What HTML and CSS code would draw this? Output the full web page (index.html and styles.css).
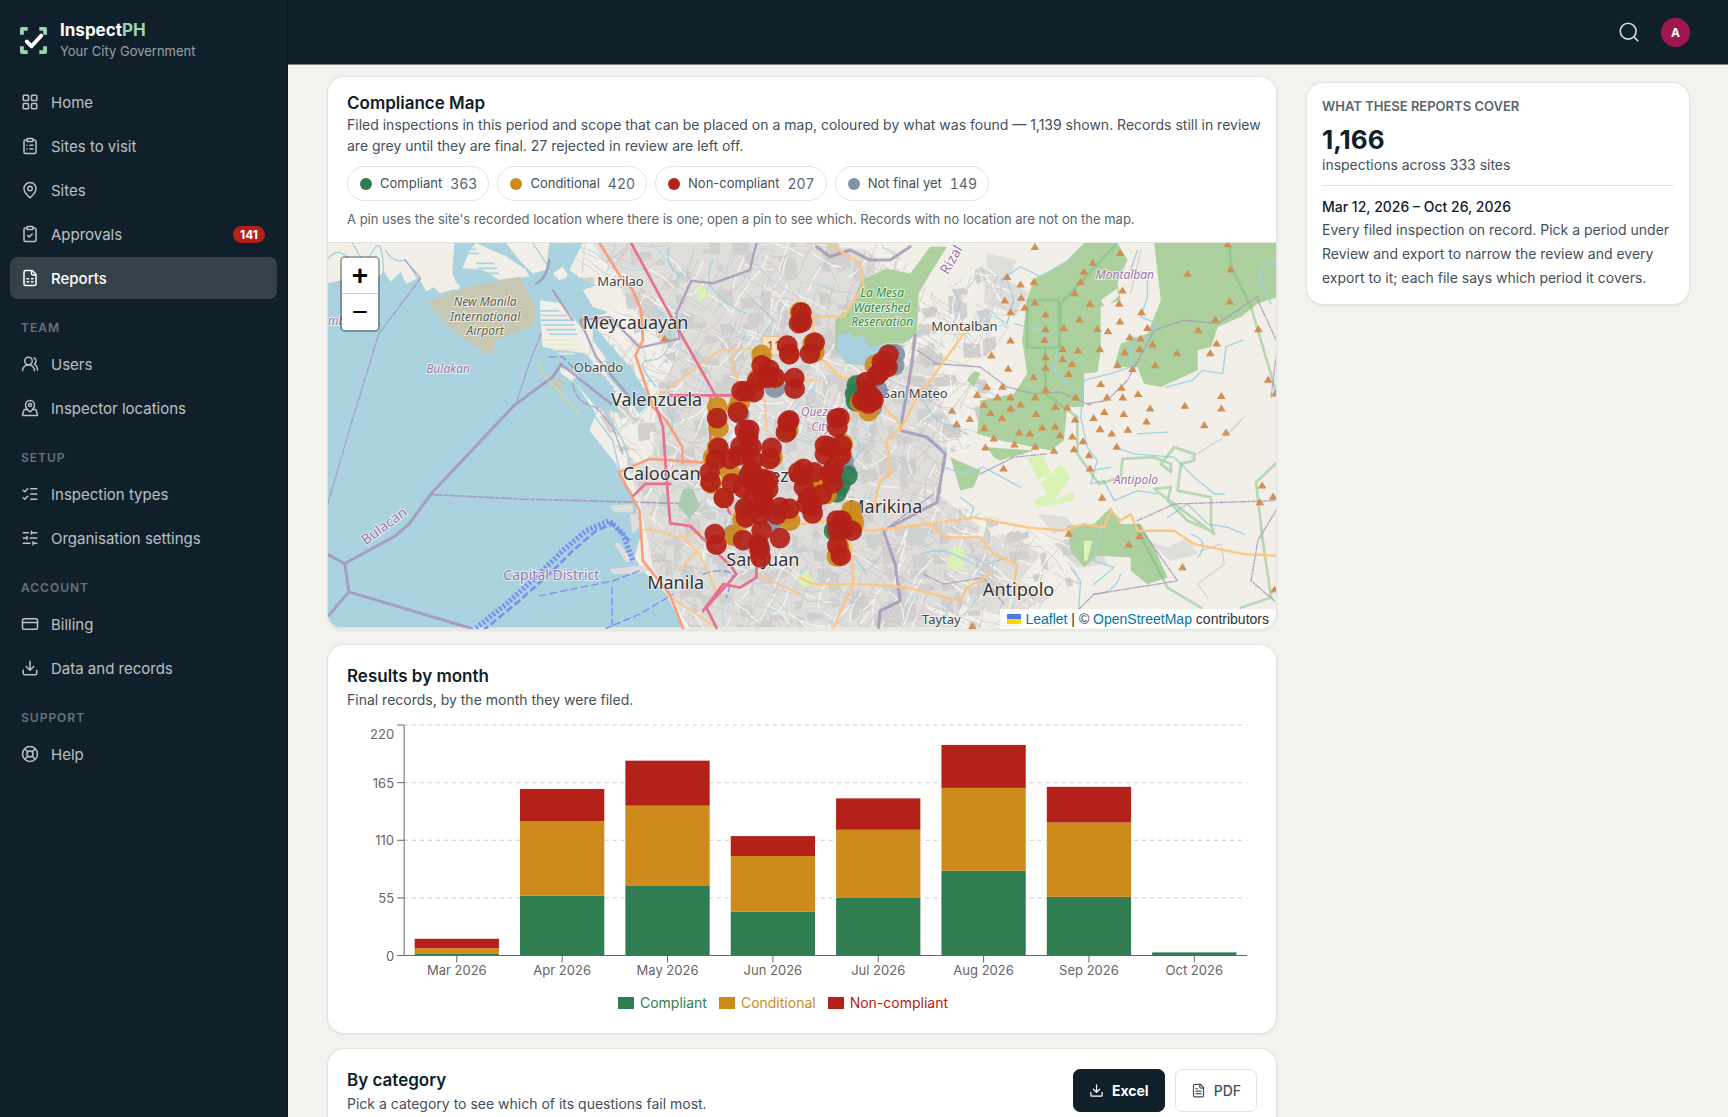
FILE: index.html
```html
<!DOCTYPE html>
<html lang="en">
<head>
<meta charset="utf-8">
<meta name="viewport" content="width=device-width, initial-scale=1">
<title>Reports – InspectPH</title>
<link rel="stylesheet" href="styles.css">
</head>
<body>
<svg class="sprite" aria-hidden="true">
  <symbol id="i-grid" viewBox="0 0 24 24"><rect x="3" y="3" width="7" height="7" rx="1"/><rect x="14" y="3" width="7" height="7" rx="1"/><rect x="14" y="14" width="7" height="7" rx="1"/><rect x="3" y="14" width="7" height="7" rx="1"/></symbol>
  <symbol id="i-cliplist" viewBox="0 0 24 24"><rect x="8" y="2" width="8" height="4" rx="1"/><path d="M16 4h2a2 2 0 0 1 2 2v14a2 2 0 0 1-2 2H6a2 2 0 0 1-2-2V6a2 2 0 0 1 2-2h2M12 11h4M12 16h4M8 11h.01M8 16h.01"/></symbol>
  <symbol id="i-pin" viewBox="0 0 24 24"><path d="M20 10c0 5-5.500 10.200-7.400 11.800a1 1 0 0 1-1.200 0C9.500 20.200 4 15 4 10a8 8 0 0 1 16 0"/><circle cx="12" cy="10" r="3"/></symbol>
  <symbol id="i-clipcheck" viewBox="0 0 24 24"><rect x="8" y="2" width="8" height="4" rx="1"/><path d="M16 4h2a2 2 0 0 1 2 2v14a2 2 0 0 1-2 2H6a2 2 0 0 1-2-2V6a2 2 0 0 1 2-2h2M9 14l2 2 4-4"/></symbol>
  <symbol id="i-sheet" viewBox="0 0 24 24"><path d="M15 2H6a2 2 0 0 0-2 2v16a2 2 0 0 0 2 2h12a2 2 0 0 0 2-2V7zM14 2v4a2 2 0 0 0 2 2h4M8 13h2M14 13h2M8 17h2M14 17h2"/></symbol>
  <symbol id="i-users" viewBox="0 0 24 24"><path d="M18 21a8 8 0 0 0-16 0"/><circle cx="10" cy="8" r="5"/><path d="M22 20c0-3.370-2-6.500-4-8a5 5 0 0 0-.450-8.300"/></symbol>
  <symbol id="i-pinned" viewBox="0 0 24 24"><path d="M18 8c0 3.613-3.869 7.429-5.393 8.795a1 1 0 0 1-1.214 0C9.870 15.429 6 11.613 6 8a6 6 0 0 1 12 0"/><circle cx="12" cy="8" r="2"/><path d="M8.714 14h-3.710a1 1 0 0 0-.948.683l-2.004 6A1 1 0 0 0 3 22h18a1 1 0 0 0 .948-1.316l-2-6a1 1 0 0 0-.949-.684h-3.712"/></symbol>
  <symbol id="i-checks" viewBox="0 0 24 24"><path d="M13 5h8M13 12h8M13 19h8M3 17l2 2 4-4M3 7l2 2 4-4"/></symbol>
  <symbol id="i-sliders" viewBox="0 0 24 24"><path d="M10 5H3M12 19H3M14 3v4M16 17v4M21 12h-9M21 19h-5M21 5h-7M8 10v4M8 12H3"/></symbol>
  <symbol id="i-card" viewBox="0 0 24 24"><rect x="2" y="5" width="20" height="14" rx="2"/><path d="M2 10h20"/></symbol>
  <symbol id="i-download" viewBox="0 0 24 24"><path d="M12 3v12M7 10l5 5 5-5M21 15v4a2 2 0 0 1-2 2H5a2 2 0 0 1-2-2v-4"/></symbol>
  <symbol id="i-help" viewBox="0 0 24 24"><circle cx="12" cy="12" r="10"/><circle cx="12" cy="12" r="4"/><path d="M4.930 4.930l4.240 4.240M14.830 9.170l4.240-4.240M14.830 14.830l4.240 4.240M9.170 14.830l-4.240 4.240"/></symbol>
  <symbol id="i-doc" viewBox="0 0 24 24"><path d="M15 2H6a2 2 0 0 0-2 2v16a2 2 0 0 0 2 2h12a2 2 0 0 0 2-2V7zM14 2v4a2 2 0 0 0 2 2h4M10 9H8M16 13H8M16 17H8"/></symbol>
  <symbol id="i-search" viewBox="0 0 24 24"><circle cx="11" cy="11" r="9.500"/><path d="M22.500 22.500l-4.700-4.700"/></symbol>
</svg>

<div class="shell">
  <aside class="sidebar">
    <div class="brand">
      <svg class="brand-mark" viewBox="0 0 30 30" aria-hidden="true">
        <path class="brand-frame" d="M3 9V3h6M21 3h6v6M27 21v6h-6M9 27H3v-6"/>
        <path class="brand-tick" d="M8 16l5 5L23 10"/>
      </svg>
      <div>
        <div class="brand-name">Inspect<span>PH</span></div>
        <div class="brand-org">Your City Government</div>
      </div>
    </div>
    <nav class="nav" aria-label="Main">
      <a href="#"><svg class="icon"><use href="#i-grid"/></svg>Home</a>
      <a href="#"><svg class="icon"><use href="#i-cliplist"/></svg>Sites to visit</a>
      <a href="#"><svg class="icon"><use href="#i-pin"/></svg>Sites</a>
      <a href="#"><svg class="icon"><use href="#i-clipcheck"/></svg>Approvals<span class="count">141</span></a>
      <a href="#" class="active" aria-current="page"><svg class="icon"><use href="#i-sheet"/></svg>Reports</a>
      <h2>TEAM</h2>
      <a href="#"><svg class="icon"><use href="#i-users"/></svg>Users</a>
      <a href="#"><svg class="icon"><use href="#i-pinned"/></svg>Inspector locations</a>
      <h2>SETUP</h2>
      <a href="#"><svg class="icon"><use href="#i-checks"/></svg>Inspection types</a>
      <a href="#"><svg class="icon"><use href="#i-sliders"/></svg>Organisation settings</a>
      <h2>ACCOUNT</h2>
      <a href="#"><svg class="icon"><use href="#i-card"/></svg>Billing</a>
      <a href="#"><svg class="icon"><use href="#i-download"/></svg>Data and records</a>
      <h2>SUPPORT</h2>
      <a href="#"><svg class="icon"><use href="#i-help"/></svg>Help</a>
    </nav>
  </aside>

  <div class="page">
    <header class="topbar">
      <button class="search" type="button" aria-label="Search"><svg class="icon"><use href="#i-search"/></svg></button>
      <button class="avatar" type="button" aria-label="Account">A</button>
    </header>

    <main class="content">
      <div class="reports">
        <section class="card map-card">
          <div class="map-head">
            <h1>Compliance Map</h1>
            <p class="lead">Filed inspections in this period and scope that can be placed on a map, coloured by what was found — 1,139 shown. Records still in review are grey until they are final. 27 rejected in review are left off.</p>
            <div class="pills">
              <button type="button" class="pill"><i class="dot good"></i>Compliant<b>363</b></button>
              <button type="button" class="pill"><i class="dot warn"></i>Conditional<b>420</b></button>
              <button type="button" class="pill"><i class="dot bad"></i>Non-compliant<b>207</b></button>
              <button type="button" class="pill"><i class="dot open"></i>Not final yet<b>149</b></button>
            </div>
            <p class="note">A pin uses the site's recorded location where there is one; open a pin to see which. Records with no location are not on the map.</p>
          </div>
          <div class="map">
            <svg class="map-art" viewBox="0 0 948 385" preserveAspectRatio="xMidYMid slice" role="img" aria-label="Map of Metro Manila with inspection pins">
              <defs>
                <clipPath id="urban"><path d="M700 9H1440L1700 9L1860 180L1700 390L1750 420L1800 200L2010 60L2100 200L1980 400L2130 570L1880 640L1860 780L2080 850L2260 900L2300 1160H1110L1000 980L980 780L930 690L850 540L760 420L780 230Z"/></clipPath>
              </defs>
              <rect class="land" width="948" height="385"/>
              <!-- geometry is kept at three units per map pixel -->
              <g transform="translate(-8 -3) scale(.3333)">
                <path class="built" d="M820 9H1440L1640 30L1780 150L1560 200L1640 330L1760 380L1830 300L1880 590L1840 750L1980 860L1900 1160H1110L1000 980L960 780L930 690L1000 640L1010 470L1080 330L950 220Z"/>
                <path class="built" d="M2000 40l90 20 -30 60 70 40 -50 60 -90 -30ZM1810 590l70 10 0 60 -110 60 40 120 -130 0 10 -180ZM1880 900l180 -20 100 60 -60 80 90 50 -120 60 -160 -40ZM1810 480l70 40 20 50 -110 10ZM2200 910l50 -20 50 50 40 -20 20 50 -90 10ZM2150 820l90 10 20 30 -60 20ZM2480 900l60 20 60 -30 30 50 -80 20Z"/>
                <g id="streets" clip-path="url(#urban)"></g>

                <path class="water" d="M24 130L60 122 82 108 110 128 135 112 160 126 195 95 215 125 245 95 262 132 300 112 322 155 345 140 420 150 400 100 405 9 560 9 600 60 640 100 680 90 690 9 790 9 750 90 790 120 840 140 870 180 860 220 800 235 790 330 880 440 900 520 830 500 770 430 720 375 640 260 650 180 720 375 725 400 770 430 830 520 810 570 850 620 890 670 900 700 940 760 950 800 965 880 945 950 970 990 1040 1060 1090 1160H24Z"/>
                <path class="land" d="M345 60q20-60 60-40l-10 90 30 30-60 20-35-30ZM470 9l90 40 60 40 10 20-90 10-50-30-60-5 20-50ZM570 9h120l-40 60-30-10ZM660 180l70 10 90 120-20 30-130-20ZM730 380l50 30-30 10ZM790 150l60-20 70 40-40 50-60-20ZM700 100l30-20 20 30-30 10Z"/>
                <path class="hatch" d="M405 16h60M405 28h65M410 40h70M470 70h55M475 85h60M480 100h60M660 212h60M662 226h80M665 240h90M670 254h95M680 268h90M690 282h85M815 412h45M820 426h50M825 440h60M830 454h60"/>
                <path class="hatch pale" d="M670 300h90M690 314h90M700 328h80M715 340h50"/>
                <path class="water" d="M820 250l40 50 80 90 60 100-20 10-80-90-80-110ZM860 340l70 100 50 60-20 20-100-120Z"/>
                <path class="airport" d="M325 187L430 145 600 110 632 170 648 200 645 255 530 300 522 342 500 338 400 270ZM695 430l22-15 20 15-22 20Z"/>
                <path class="built" d="M870 795l70-5v25l-55 0ZM885 910l15-3 35 50-15 8ZM870 985l100-12 30 12-40 12-80 3ZM930 820l30 0 0 40-20 20Z"/>
                <path class="river" d="M24 60q30-40 60-10t40 30 40-50 30 90M200 30q20 40 60 30l40 60M100 9l30 50M640 9l60 90-40 60 0 60M720 9q40 80 20 120l60 60M820 520l60 80 20 90M850 500l60 100 20 60M1000 200q60 40 50 100t-60 60 20 80M1180 60q-30 60 10 100t90 60M1050 20q-20 60 40 90M1040 500q40 60-10 100M1300 180l60 60-40 60"/>

                <path class="border wide" d="M725 372L700 410 585 495 340 755 270 850 230 885 78 968 24 940M78 968L90 1053 24 1130M90 1053L455 1162"/>
                <path class="border" d="M725 372L875 490M782 240L830 350 930 470M782 240L870 230 920 280 960 322 1080 295 1070 220 1115 122 1180 130 1290 90 1310 9M650 130q30-10 40-70M700 150l60 90"/>
                <path class="border thin" d="M258 60L305 115 180 280 100 540 24 800M665 280l-35 90-40 120M760 430q10 60 70 70l50 60 30 80"/>
                <path class="border dashed" d="M340 762L600 775 1140 790"/>
                <path class="ferry-band" d="M460 1170L560 1090 650 1010 730 930 800 870 870 840 910 880 940 960"/>
                <path class="ferry-band two" d="M490 1170L600 1080 700 990 760 930 830 870 880 850 930 900"/>
                <path class="ferry" d="M660 1065L880 1020 960 990M878 1040v115L860 1162 960 1120 1060 1060M690 350l40 0 30 30M1150 1000q60-20 90 0l-20 70"/>
                <path class="rail" d="M655 365l20 40 110 120"/>

                <path class="minor" d="M1020 465L1200 330 1270 325 1340 330M1235 330l20 110 80 40 5 90M960 866l60 5 60 20 60-15 100 10M1080 880l60 60 50 110M1140 920l-60 70M1170 680l40 90 40 60M1440 420l60 0M1310 1000l130 60M1040 1060l150 100"/>
                <path class="trunk" d="M840 9L900 105 940 150 965 210 970 300 948 345 1000 500 1040 540 1088 620V668M898 695L990 655 1180 668M898 695L960 810 970 960 1050 1060 1090 1162"/>
                <path class="motorway" d="M935 9L1030 185 1190 470M1050 465h200M1010 500l20 60 12 170 10 118 60 8 120 120M942 765l35-35h75M1172 470v240l60 110M1230 970l20 30-90 100 30 60M1150 1110l60-80 50 10 50-30 0-30-20-50"/>
                <path class="park" d="M1090 745l30 0 20 50-30 40-35-40Z"/><path class="lime" d="M1130 145l20-10 20 30-30 20Z"/>

                <!-- eastern half, watershed and ranges -->
                <g transform="translate(1440 0)">
                  <path class="forest" d="M185 120L260 85 330 100 390 20 440 20 390 100 355 160 350 280 310 310 250 310 190 375 140 370 105 330 105 240 150 200ZM700 115L790 70 850 9H950L980 60 950 130 960 180 900 200 900 330 890 395 850 400 850 500 800 500 790 600 750 630 600 600 530 580 540 480 640 460 680 400 665 300 680 180ZM1060 9H1430V170L1370 190 1320 230 1250 260 1230 320 1190 330 1190 390 1080 440 1030 430 1010 380 940 380 960 310 1040 280 1080 180ZM500 420q20-40 40-20l-20 40ZM560 620L700 630 600 660 580 650ZM450 650L540 690 520 740 480 750ZM800 855L880 850 930 800 960 850 1020 850 1060 920 1100 1010 1040 1030 990 990 990 950 890 945 850 980 810 930Z"/>
                  <path class="lime" d="M680 650l50-5 20 60-40 10ZM720 730l60-60 30 40-50 70 60-30 0 30-110 20-10-20 40-20ZM440 980l20-70 30 20 0 60ZM850 900l25 0-15 60-10 0ZM20 990l30 40-40 10-20-30Z"/>
                  <path class="land" d="M900 180l50-35 5 20-40 40Z"/>
                  <path class="lake" d="M112 285l40-10 10 20 30-10 15 35 60-10 50 5-70 55-60 5-50-10-25-30Z"/>
                  <path class="river" d="M600 120l60-40 60 30 100-60M620 120l20 60-20 70M460 150l20 40-20 60 30 20M1010 30l-20 60 50 10 0 70-20 60 50 20-30 50-50-10 0 90-60 20-80 20-10 110 20 90 30 40-20 70 40-10 30 60 70-30 60 10M640 250l80 20 50 60-10 60 60 60M1430 60q-60 0-50 70l30 60M1325 300l-50 20-10 80-60-10-30 30-80 20M1010 580l90-5M940 620l60 20 120 10 60 60 60 50 30 0M870 690l60-10M1100 830l60-40 60 60 60 10 50 20M350 460l60 80 90 40M430 680l60 20 60-20 110 60M480 770l40 30-10 30M360 940q60-20 100 0t80 40M500 940l60 30 60-20M900 860l-20 100 60 20-60 50M810 980l30 40-10 140M880 1060q60 0 80-60M1170 880q60 20 20 70M30 500l60 60M160 590q40 30 0 70t20 60M170 960l30 40"/>
                  <path class="green-border" d="M945 15L780 190 778 322H680V180H775V320M735 325V460L830 530 830 640 895 730 960 710 965 655 1060 650 1110 670 1110 695 1080 670 1120 620 1180 640 1180 660 1140 670 1130 750 1230 770V850L1240 880 1060 745 1110 740 1100 780 1160 840 1230 870M1285 20L1290 80 1350 200 1425 455M1428 665L1365 725 1385 900 1410 1070 1320 1100M1000 850L1100 1040 1200 1100"/>
                  <path class="border wide" d="M50 20l40 30 60-20 60 30 60 0 60-40M345 285L335 370 300 570 380 590 435 640 410 785 250 870 285 970 300 1080 240 1110 235 1160"/>
                  <path class="border thin" d="M350 330l60 40 130 10 80 60 80 20 80-5 90 40M400 370l140 10M860 490l60-10 60-60 80-150 90-30 100 10 120-80M1370 180l60 130-20 160M540 700l100-50 100-10M250 870l150-110M1010 840l110-50 300-10M1010 850l120 170-250 40-80 80M1430 800l-60 100-20 120 70 60M370 1000l60 30 120-20 60 80"/>
                  <path class="minor big" d="M20 9h60l100 60 10 70-60 90H40V330l80 80 80 10M310 550L260 600 270 700 240 720 220 800M490 280L340 490 300 570M240 490l60 60M190 440l-10 60-60 80M90 850l120 20 180-20 130-20 160 30 110 10 60-20 60 10 20-50 30 30 30-20 20 50 110 0 60 40 150 30 200 10M0 1010l40 20 160 0 120 10 160 40 20-40 70-40M150 870l10 160-60 130M380 850l60 40 100 0 40 50 70 30-10 60 60 40M0 850l90-10"/>
                  <path class="track" d="M1020 30l-30 130M1170 650l100-60 60-60M1200 930l60-20 10 60-80 60 30 40"/>
                </g>
                <g id="peaks" class="peak"></g>
              </g>
              <g class="labels">
                <g class="town">
                  <text x="293" y="43">Marilao</text><text x="271" y="129">Obando</text><text x="636" y="88">Montalban</text><text x="587" y="155">San Mateo</text><text x="613" y="380">Taytay</text>
                </g>
                <g class="city">
                  <text x="308" y="86">Meycauayan</text><text x="329" y="163">Valenzuela</text><text x="334" y="236">Caloocan</text><text x="348" y="345">Manila</text><text x="435" y="322">San Juan</text><text x="557" y="269">Marikina</text><text x="690" y="352">Antipolo</text><text x="450" y="238">Quezon</text>
                </g>
                <g class="area">
                  <text x="121" y="130">Bulakan</text><text x="796" y="36">Montalban</text><text x="807" y="240">Antipolo</text><text x="493" y="173">Quezon</text><text x="493" y="188">City</text><text x="10" y="82">mb</text>
                </g>
                <g class="province">
                  <text x="224" y="336">Capital District</text><text transform="translate(60 286) rotate(-36)">Bulacan</text><text transform="translate(627 19) rotate(-60)">Rizal</text>
                </g>
                <g class="field"><text x="158" y="63">New Manila</text><text x="158" y="78">International</text><text x="158" y="92">Airport</text></g>
                <g class="reserve"><text x="554" y="54">La Mesa</text><text x="554" y="69">Watershed</text><text x="554" y="83">Reservation</text></g>
                <g class="shield"><rect x="434" y="93" width="27" height="19"/><text x="446" y="107">11</text></g>
              </g>
              <g id="pins" class="pins" transform="translate(352 47) scale(.3333)"></g>
            </svg>
            <div class="zoom">
              <button type="button" aria-label="Zoom in">+</button>
              <button type="button" aria-label="Zoom out">−</button>
            </div>
            <div class="credit">
              <svg viewBox="0 0 14 10" aria-hidden="true"><path fill="#4c7be1" d="M0 0h14v5H0z"/><path fill="#ffd500" d="M0 5h14v5H0z"/></svg>
              <span><a href="#">Leaflet</a> | © <a href="#">OpenStreetMap</a> contributors</span>
            </div>
          </div>
        </section>

        <section class="card panel">
          <h2>Results by month</h2>
          <p class="lead">Final records, by the month they were filed.</p>
          <svg id="chart" class="chart" viewBox="0 0 908 270" role="img" aria-label="Stacked bars of results by month"></svg>
          <ul class="legend">
            <li class="good">Compliant</li>
            <li class="warn">Conditional</li>
            <li class="bad">Non-compliant</li>
          </ul>
        </section>

        <section class="card panel split">
          <div>
            <h2>By category</h2>
            <p class="lead">Pick a category to see which of its questions fail most.</p>
          </div>
          <div class="actions">
            <button type="button" class="btn primary"><svg class="icon"><use href="#i-download"/></svg>Excel</button>
            <button type="button" class="btn"><svg class="icon"><use href="#i-doc"/></svg>PDF</button>
          </div>
        </section>
      </div>

      <aside class="card cover">
        <h2>WHAT THESE REPORTS COVER</h2>
        <div class="total">1,166</div>
        <p class="across">inspections across 333 sites</p>
        <p class="range">Mar 12, 2026 – Oct 26, 2026</p>
        <p class="about">Every filed inspection on record. Pick a period under Review and export to narrow the review and every export to it; each file says which period it covers.</p>
      </aside>
    </main>
  </div>
</div>
<script src="app.js"></script>
</body>
</html>
```
FILE: styles.css
```css
:root {
  --ink: #10202a;
  --body: #44505a;
  --muted: #5b666d;
  --line: #e3e4df;
  --good: #2f7d51;
  --warn: #cd8b1c;
  --bad: #b32118;
  --open: #8492a8;
}
* { box-sizing: border-box; }
body {
  margin: 0;
  font-family: Inter, "Liberation Sans", sans-serif;
  font-size: 14px;
  line-height: 21px;
  color: var(--body);
  background: #f2f3ee;
}
h1, h2, p, ul { margin: 0; padding: 0; }
button { font: inherit; color: inherit; cursor: pointer; }
.sprite { position: absolute; width: 0; height: 0; }
.icon {
  width: 18px; height: 18px; flex: none;
  fill: none; stroke: currentColor; stroke-width: 2;
  stroke-linecap: round; stroke-linejoin: round;
}

.shell { display: flex; height: 100vh; overflow: hidden; }

/* Sidebar */
.sidebar { width: 288px; flex: none; background: var(--ink); border-right: 1px solid #0a151c; }
.brand { display: flex; align-items: center; gap: 12px; padding: 20px 19px 20px; }
.brand-mark { width: 29px; height: 29px; fill: none; }
.brand-frame { stroke: #9fd2b5; stroke-width: 4; stroke-linejoin: round; }
.brand-tick { stroke: #fff; stroke-width: 4; stroke-linecap: round; stroke-linejoin: round; }
.brand-name { font-size: 17px; line-height: 21px; font-weight: 700; color: #fff; }
.brand-name span { color: #9fd2b5; }
.brand-org { font-size: 13px; line-height: 20px; color: #98a1a6; }
.nav { display: flex; flex-direction: column; gap: 2px; padding: 0 10px; }
.nav a {
  display: flex; align-items: center; gap: 12px;
  height: 42px; padding: 0 12px 0 11px; border-radius: 8px;
  color: #bac1c5; font-size: 15px; text-decoration: none;
}
.nav a.active { background: #344149; color: #fff; font-weight: 500; }
.nav .count {
  margin-left: auto; padding: 0 7px; border-radius: 9px;
  background: var(--bad); color: #fff; font-size: 12px; line-height: 17px; font-weight: 700;
}
.nav h2 {
  padding: 18px 11px 4px; font-size: 12px; line-height: 18px;
  font-weight: 600; letter-spacing: 1px; color: #66727a;
}

/* Top bar */
.page { flex: 1; min-width: 0; }
.topbar {
  display: flex; align-items: center; justify-content: flex-end; gap: 22px;
  height: 65px; padding: 0 38px; background: var(--ink); border-bottom: 1px solid #7b868b;
}
.search { display: flex; padding: 0; border: 0; background: none; color: #d3d9dc; }
.search .icon { width: 20px; height: 20px; }
.avatar {
  width: 29px; height: 29px; padding: 0; border: 0; border-radius: 50%;
  background: #a01650; color: #fff; font-size: 12px; font-weight: 700;
}

/* Content */
.content {
  display: grid; grid-template-columns: minmax(0, 1fr) 382px; gap: 31px;
  align-items: start; padding: 12px 39px 0 40px;
}
.reports { display: flex; flex-direction: column; gap: 16px; }
.card { background: #fff; border-radius: 16px; box-shadow: 0 0 0 1px var(--line), 0 1px 3px 1px #10202a10; }
.card h1, .card h2 { font-size: 17px; line-height: 22px; font-weight: 600; color: var(--ink); }

.map-card { overflow: hidden; }
.map-head { padding: 15px 8px 13px 19px; border-bottom: 1px solid var(--line); }
.pills { display: flex; flex-wrap: wrap; gap: 8px; margin: 10px 0 8px; }
.pill {
  display: flex; align-items: center; gap: 8px; height: 35px; padding: 0 11px 0 12px;
  border: 1px solid var(--line); border-radius: 18px; background: #fff; font-size: 13px;
}
.pill b { font-size: 14px; font-weight: 400; font-variant-numeric: tabular-nums; color: var(--muted); }
.dot { width: 12px; height: 12px; border-radius: 50%; }
.dot.good { background: var(--good); }
.dot.warn { background: var(--warn); }
.dot.bad { background: var(--bad); }
.dot.open { background: var(--open); }
.note { font-size: 13px; line-height: 20px; color: var(--muted); }

/* Map */
.map { position: relative; height: 386px; background: #aad3df; }
.map-art { display: block; width: 100%; height: 100%; }
.map-art path { fill: none; stroke-linejoin: round; stroke-linecap: round; }
.map-art .land { fill: #f2efe9; }
.map-art .water { fill: #aad3df; }
.map-art .lake { fill: #a9d0e0; }
.map-art .built { fill: #e0dedb; }
.map-art .airport { fill: #c8c7b1; }
.map-art .forest { fill: #add19e; }
.map-art .park { fill: #aacbaf; }
.map-art .lime { fill: #d9f3b4; }
.map-art .river { stroke: #a3d1e2; stroke-width: 4; }
.map-art .hatch { stroke: #aad3df; stroke-width: 5; stroke-linecap: butt; }
.map-art .hatch.pale { stroke: #e6eec8; }
.map-art .border { stroke: #a292b6; stroke-width: 7; stroke-opacity: .8; }
.map-art .border.wide { stroke-width: 9; }
.map-art .border.thin { stroke-width: 4; stroke-dasharray: 18 5 4 5; }
.map-art .border.dashed { stroke-width: 5; stroke-dasharray: 28 7 10 7; }
.map-art .green-border { stroke: #7cc086; stroke-width: 8; stroke-opacity: .5; }
.map-art .ferry-band { stroke: #7c8ef2; stroke-width: 16; stroke-dasharray: 7 6; stroke-linecap: butt; }
.map-art .ferry-band.two { stroke-width: 8; stroke-dasharray: 22 9; }
.map-art .ferry { stroke: #7c8ef2; stroke-width: 4; stroke-dasharray: 20 12; }
.map-art .rail { stroke: #d8da8c; stroke-width: 5; stroke-dasharray: 14 9; }
.map-art .minor { stroke: #fbc783; stroke-width: 5; }
.map-art .minor.big { stroke-width: 7; }
.map-art .trunk { stroke: #f99f7d; stroke-width: 8; }
.map-art .motorway { stroke: #e5708f; stroke-width: 8; }
.map-art .track { stroke: #cfcac6; stroke-width: 3; }
.map-art .street { stroke: #c9c4c6; stroke-width: 2; }
.map-art .street.white { stroke: #f6f4f1; stroke-width: 4; }
.map-art .street.brook { stroke: #b3d9e6; stroke-width: 3; }
.map-art .block { fill: #d2d1d0; }
.map-art .peak path { fill: #d08f55; }
.pins circle { fill-opacity: .92; }
.pins .good { fill: var(--good); }
.pins .warn { fill: var(--warn); }
.pins .bad { fill: var(--bad); }
.pins .open { fill: var(--open); }
.labels text {
  font-family: "Noto Sans", sans-serif; text-anchor: middle;
  paint-order: stroke; stroke: #ffffffb0; stroke-width: 2px; stroke-linejoin: round;
}
.labels .town text { font-size: 13px; fill: #444; }
.labels .city text { font-size: 18px; fill: #333; }
.labels .area text { font-size: 12px; font-style: italic; fill: #9c77a8; }
.labels .province text { font-size: 14px; fill: #9c77a8; }
.labels .field text { font-size: 12px; font-style: italic; fill: #5c5b4b; }
.labels .reserve text { font-size: 12px; font-style: italic; fill: #2f8c3e; }
.labels .shield rect { fill: #f9dfc2; stroke: #dcb892; }
.labels .shield text { font-size: 12px; fill: #665040; stroke: none; }
.zoom {
  position: absolute; top: 13px; left: 12px; display: flex; flex-direction: column;
  border: 2px solid #0000004d; border-radius: 5px; background-clip: padding-box;
}
.zoom button {
  width: 36px; height: 36px; padding: 0; border: 0; background: #fff; color: #000;
  font-family: "Liberation Sans", sans-serif; font-size: 28px; line-height: 34px;
}
.zoom button:first-child { border-bottom: 1px solid #ccc; border-radius: 3px 3px 0 0; font-weight: 700; }
.zoom button:last-child { border-radius: 0 0 3px 3px; }
.credit {
  position: absolute; right: 0; bottom: 0; display: flex; align-items: center; gap: 4px;
  padding: 0 7px; background: #ffffffd0;
  color: #333; font-family: "Liberation Sans", sans-serif; font-size: 14px; line-height: 20px;
}
.credit svg { width: 14px; height: 10px; }
.credit a { color: #0078a8; text-decoration: none; }

/* Chart */
.panel { padding: 20px 19px; }
.panel .lead { margin-top: 2px; }
.chart { display: block; width: 100%; margin-top: 2px; }
.chart text { font-size: 13px; fill: #666; }
.chart line { stroke: #666; }
.chart .rule { stroke: #ccc; stroke-dasharray: 4 4; }
.chart .good { fill: var(--good); }
.chart .warn { fill: var(--warn); }
.chart .bad { fill: var(--bad); }
.legend { display: flex; justify-content: center; gap: 12px; margin-top: 10px; padding-right: 38px; list-style: none; line-height: 20px; }
.legend li { display: flex; align-items: center; gap: 6px; }
.legend li::before { content: ""; width: 16px; height: 12px; background: currentColor; }
.legend .good { color: var(--good); }
.legend .warn { color: var(--warn); }
.legend .bad { color: var(--bad); }

.split { display: flex; justify-content: space-between; min-height: 200px; }
.actions { display: flex; gap: 10px; }
.btn {
  display: flex; align-items: center; gap: 8px; height: 43px; padding: 0 15px;
  border: 1px solid var(--line); border-radius: 7px; background: #fff; font-weight: 500;
}
.btn .icon { width: 15px; height: 15px; }
.btn.primary { border-color: var(--ink); background: var(--ink); color: #fff; font-weight: 700; }

/* Coverage summary */
.cover { margin-top: 6px; padding: 13px 15px 14px; }
.card.cover h2 { font-size: 13px; line-height: 20px; color: var(--muted); }
.total { margin-top: 10px; font-size: 26px; line-height: 28px; font-weight: 700; color: var(--ink); }
.across { padding-bottom: 10px; border-bottom: 1px solid var(--line); }
.range { margin-top: 9px; line-height: 23px; font-weight: 500; color: var(--ink); }
.about { line-height: 24px; }
```
FILE: app.js
```js
const NS = "http://www.w3.org/2000/svg";
function add(parent, tag, attrs, text) {
  const el = document.createElementNS(NS, tag);
  for (const key in attrs) el.setAttribute(key, attrs[key]);
  if (text !== undefined) el.textContent = text;
  parent.appendChild(el);
  return el;
}

// Results by month: [label, compliant, conditional, non-compliant]
const months = [
  ["Mar 2026", 2, 5, 9], ["Apr 2026", 57, 71, 31], ["May 2026", 67, 76, 43], ["Jun 2026", 42, 53, 19],
  ["Jul 2026", 55, 65, 30], ["Aug 2026", 81, 79, 41], ["Sep 2026", 56, 71, 34], ["Oct 2026", 3, 0, 0]
];
const chart = document.getElementById("chart");
const plotLeft = 57, plotRight = 898, plotTop = 13, plotBase = 243, plotMax = 220;
const toY = v => plotBase - v * (plotBase - plotTop) / plotMax;
for (const v of [0, 55, 110, 165, 220]) {
  add(chart, "line", { class: "rule", x1: plotLeft, x2: plotRight, y1: toY(v), y2: toY(v) });
  add(chart, "line", { x1: plotLeft - 7, x2: plotLeft, y1: toY(v), y2: toY(v) });
  add(chart, "text", { x: plotLeft - 10, y: v === plotMax ? 27 : toY(v) + 5, "text-anchor": "end" }, v);
}
const step = (plotRight - plotLeft) / months.length;
months.forEach(([label, ...values], i) => {
  const x = plotLeft + i * step;
  let sum = 0;
  values.forEach((v, k) => {
    sum += v;
    if (v) add(chart, "rect", { class: ["good", "warn", "bad"][k], x: x + step / 10, y: toY(sum), width: step * .8, height: toY(sum - v) - toY(sum) });
  });
  add(chart, "line", { x1: x + step / 2, x2: x + step / 2, y1: plotBase, y2: plotBase + 7 });
  add(chart, "text", { x: x + step / 2, y: 262, "text-anchor": "middle" }, label);
});
add(chart, "line", { x1: plotLeft, x2: plotLeft, y1: plotTop, y2: plotBase });
add(chart, "line", { x1: plotLeft, x2: plotRight, y1: plotBase, y2: plotBase });

// Street mesh and building blocks
let seed = 11;
const rnd = () => (seed = (seed * 16807) % 2147483647) / 2147483647;
const streets = document.getElementById("streets");
let blocks = "", grey = "", white = "", brook = "";
for (let i = 0; i < 420; i++) {
  const x = 760 + rnd() * 1500, v = rnd() * 1160, w = 12 + rnd() * 45, h = 12 + rnd() * 40;
  blocks += `M${x} ${v}l${w} ${rnd() * 16 - 8} ${rnd() * 10} ${h} ${-w} ${rnd() * 12}Z`;
}
for (let i = 0; i < 1300; i++) {
  const x = 760 + rnd() * 1500, v = rnd() * 1160;
  let a = (rnd() < .5 ? .25 : 1.8) + rnd() * .5;
  let d = `M${x} ${v}`;
  for (let k = 0; k < 4; k++) {
    d += `l${Math.cos(a) * 24} ${Math.sin(a) * 24}`;
    a += rnd() * .7 - .35;
  }
  if (i % 12 === 0) brook += d; else if (i % 3) grey += d; else white += d;
}
add(streets, "path", { class: "block", d: blocks });
add(streets, "path", { class: "street white", d: white });
add(streets, "path", { class: "street", d: grey });
add(streets, "path", { class: "street brook", d: brook });

// Mountain peaks, eastern half
const peaks = "703,20 958,38 876,68 850,94 840,125 822,158 700,125 660,132 620,110 613,180 662,172 703,187 672,202 630,215 735,222 735,266 732,298 789,262 836,237 868,190 965,150 955,190 1022,215 958,243 890,265 922,272 1040,262 987,290 1019,294 1016,326 1055,312 972,335 897,326 832,330 786,326 786,356 735,350 735,381 699,410 814,370 804,400 630,300 573,345 623,384 950,374 995,385 1063,374 1128,338 1160,100 1280,12 1289,87 1286,183 1243,237 1192,269 1372,266 1247,309 1228,338 1401,417 1423,458 735,447 704,470 630,470 606,438 559,438 530,463 591,470 551,492 660,491 630,503 570,517 605,532 707,520 455,510 508,535 469,550 551,562 580,593 555,620 656,575 688,578 725,561 764,557 778,583 815,587 847,601 823,536 800,500 764,498 825,470 642,611 704,618 760,630 820,625 865,643 868,683 609,683 900,430 962,441 966,470 919,470 1012,460 911,514 969,520 1048,503 1037,542 879,532 898,565 933,578 981,567 948,618 1152,495 1261,466 1261,503 1210,553 1275,575 904,770 804,878 984,910 1017,885 1145,978 1383,734 1376,784 1416,767 1420,1045 516,1155";
let peakPath = "";
for (const p of peaks.split(" ")) {
  const [x, v] = p.split(",").map(Number);
  peakPath += `M${x + 1440} ${v - 11}l13 21h-26Z`;
}
peakPath += "M1035 284l15 20h-30Z";
add(document.getElementById("peaks"), "path", { d: peakPath });

// Inspection pins, drawn with the worst result on top
const pins = {
  open: "644,192 642,225 592,300 575,350 285,292 160,732 178,370 490,510 495,540 280,690 620,210 200,650",
  good: "530,285 525,310 528,332 502,555 480,585 462,720 200,560 470,605",
  warn: "245,194 360,66 328,190 398,160 403,185 112,350 116,412 180,335 172,355 235,265 584,224 540,335 565,362 325,420 488,460 485,490 278,500 150,545 95,578 132,622 160,735 188,685 330,690 320,670 515,660 520,690 478,770 470,797 410,570 440,610 112,470 415,560 100,500 280,265 520,700",
  bad: "364,67 357,99 366,95 322,166 328,192 404,157 390,190 245,225 268,238 262,262 285,262 232,272 185,302 198,303 222,305 343,263 344,295 174,365 112,383 323,395 318,426 328,390 195,420 208,418 205,440 182,468 215,470 116,472 275,472 108,508 90,545 92,575 150,505 175,495 220,510 270,505 215,540 250,565 205,560 156,578 190,592 228,590 265,570 132,622 220,620 250,615 195,652 240,650 265,595 198,680 240,672 290,672 328,654 300,650 245,720 105,730 110,762 190,748 300,742 240,775 242,800 236,760 625,193 605,215 615,225 622,230 590,255 558,275 560,300 575,320 565,340 580,330 545,330 600,245 478,382 470,385 472,410 435,465 435,492 450,470 485,465 482,495 460,535 458,578 450,550 370,535 365,555 402,545 372,590 385,620 395,645 398,668 425,612 380,640 470,690 485,690 472,718 490,715 515,720 472,765 482,795 355,545 250,640 230,565 205,480"
};
const layer = document.getElementById("pins");
for (const kind of ["open", "good", "warn", "bad"]) {
  for (const p of pins[kind].split(" ")) {
    const [cx, cy] = p.split(",");
    add(layer, "circle", { class: kind, cx, cy, r: 31 });
  }
}
```
